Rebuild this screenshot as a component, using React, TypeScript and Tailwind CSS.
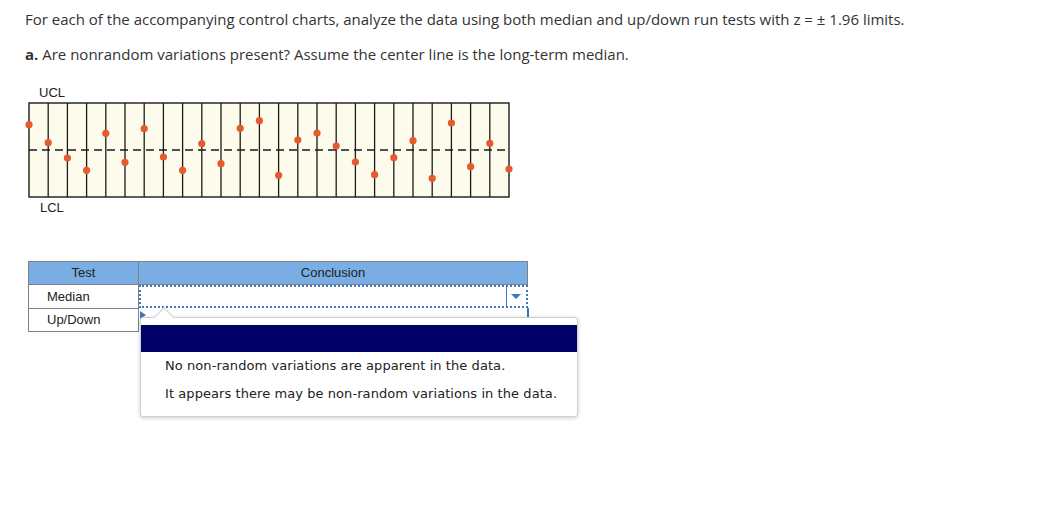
import React from "react";

const points = [
  124.7, 142.7, 158, 170.3, 133.3, 162.3, 128.7, 157, 170.3, 143.7, 163.7, 128.3, 120.7,
  175.3, 140, 133, 146, 162, 174.7, 157.7, 140.7, 178.3, 123, 166.7, 143.3, 169,
];

function ControlChart() {
  const xs = points.map((_, i) => 29 + i * 19.2);
  return (
    <svg width="495" height="100" viewBox="20 100 495 100" className="block">
      <rect x="29" y="103" width="480" height="94" fill="#fdfbeb" stroke="#1a1a1a" strokeWidth="1.4" />
      {xs.slice(1, -1).map((x) => (
        <line key={x} x1={x} y1="103" x2={x} y2="197" stroke="#1a1a1a" strokeWidth="1.3" />
      ))}
      <line x1="29" y1="150" x2="509" y2="150" stroke="#1a1a1a" strokeWidth="1.4" strokeDasharray="8 5" />
      {xs.map((x, i) => (
        <circle key={i} cx={x} cy={points[i]} r="3.6" fill="#e55a2e" />
      ))}
    </svg>
  );
}

export default function App() {
  return (
    <div className="relative min-h-[529px] w-[1047px] bg-white pl-[20px] pt-[9px] text-[#333]">
      <p className="pl-[5px] text-[15px] leading-[20px]" style={{ fontFamily: "'Open Sans', sans-serif" }}>
        For each of the accompanying control charts, analyze the data using both median and up/down run tests
        with z = ± 1.96 limits.
      </p>
      <p className="mt-[15px] pl-[5px] text-[15px] leading-[20px]" style={{ fontFamily: "'Open Sans', sans-serif" }}>
        <b>a.</b> Are nonrandom variations present? Assume the center line is the long-term median.
      </p>

      <div className="mt-[22px] font-['Liberation_Sans',Arial,sans-serif] text-[13px] text-[#222]">
        <div className="h-[14px] pl-[19px] leading-[14px]">UCL</div>
        <ControlChart />
        <div className="mt-px h-[14px] pl-[20px] leading-[14px]">LCL</div>
      </div>

      <table className="mt-[46px] ml-[8px] border-collapse font-['Liberation_Sans',Arial,sans-serif] text-[13px] text-[#222]">
        <thead>
          <tr className="h-[23px] bg-[#79ade3]">
            <th className="w-[110px] border border-[#808080] p-0 text-center font-normal">Test</th>
            <th className="w-[389px] border border-[#808080] p-0 text-center font-normal">Conclusion</th>
          </tr>
        </thead>
        <tbody>
          <tr className="h-[23px]">
            <td className="border border-[#808080] pl-[18px]">Median</td>
            <td className="p-0">
              <div className="flex h-[23px] border-2 border-dotted border-[#3b78c4]">
                <div className="flex-1" />
                <div className="flex w-[20px] items-center justify-center border-l border-[#3b78c4]">
                  <span className="h-0 w-0 border-x-[5px] border-t-[5px] border-x-transparent border-t-[#3b78c4]" />
                </div>
              </div>
            </td>
          </tr>
          <tr className="h-[23px]">
            <td className="border border-[#808080] pl-[18px]">Up/Down</td>
            <td className="relative border-r-2 border-[#3b78c4] p-0">
              <span className="absolute left-[1px] top-[3px] h-0 w-0 border-y-[4px] border-l-[6px] border-y-transparent border-l-[#3b78c4]" />
            </td>
          </tr>
        </tbody>
      </table>

      <div className="absolute left-[140px] top-[317px] w-[438px] rounded-[3px] border border-[#cfcfcf] bg-white pb-[8px] pt-[7px] shadow-[0_1px_4px_rgba(0,0,0,0.2)]">
        <span className="absolute -top-[8px] left-[16px] h-[14px] w-[14px] rotate-45 border-l border-t border-[#cfcfcf] bg-white" />
        <div className="relative h-[27px] bg-[#000066]" />
        <ul className="font-['DejaVu_Sans',Verdana,sans-serif] text-[13px] tracking-[0.07px] text-[#222]">
          <li className="h-[28px] pl-[24px] leading-[28px]">No non-random variations are apparent in the data.</li>
          <li className="h-[28px] pl-[24px] leading-[28px]">It appears there may be non-random variations in the data.</li>
        </ul>
      </div>
    </div>
  );
}
